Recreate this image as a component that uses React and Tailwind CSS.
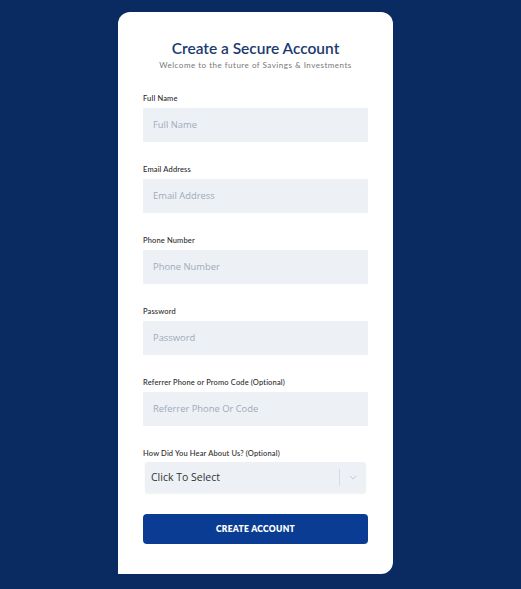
import React from "react";

const fields = [
  { label: "Full Name", ph: "Full Name" },
  { label: "Email Address", ph: "Email Address" },
  { label: "Phone Number", ph: "Phone Number" },
  { label: "Password", ph: "Password" },
  { label: "Referrer Phone or Promo Code (Optional)", ph: "Referrer Phone Or Code" },
];

export default function App() {
  return (
    <div className="w-[521px] h-[589px] bg-[#0a2a62] pt-[12px] pl-[118px] font-['Lato',sans-serif]">
      <div className="w-[275px] h-[562px] bg-white rounded-t-[12px] rounded-br-[12px] px-[25px] pt-[26px]">
        <h1 className="text-center text-[15.5px] leading-[20px] font-semibold text-[#1b3a70]">
          Create a Secure Account
        </h1>
        <p className="mt-[2px] text-center text-[8px] leading-[10px] text-[#777] tracking-[0.5px]">
          Welcome to the future of Savings &amp; Investments
        </p>
        <div className="mt-[24px] flex flex-col gap-[23px]">
          {fields.map((f) => (
            <div key={f.label}>
              <div className="text-[7.5px] leading-[10px] font-medium text-[#2b2b2b] tracking-[0.15px] mb-[4px]">
                {f.label}
              </div>
              <div className="h-[34px] bg-[#edf1f6] flex items-center pl-[10px] text-[9.4px] text-[#a0aab8] font-['Open_Sans',sans-serif]">
                {f.ph}
              </div>
            </div>
          ))}
          <div>
            <div className="text-[7.5px] leading-[10px] font-medium text-[#2b2b2b] tracking-[0.15px] mb-[3px]">
              How Did You Hear About Us? (Optional)
            </div>
            <div className="mx-[2px] h-[31px] bg-[#edf1f6] rounded-[3px] shadow-[0_1px_2px_rgba(0,0,0,0.06)] flex items-center pl-[6px] text-[10.5px] text-[#333] font-['Open_Sans',sans-serif]">
              <span className="flex-1">Click To Select</span>
              <span className="w-px h-[17px] bg-[#d6dbe2]" />
              <span className="w-[26px] flex justify-center">
                <svg width="8" height="5" viewBox="0 0 8 5" fill="none">
                  <path d="M1 1l3 3 3-3" stroke="#c3c9d2" strokeWidth="1" />
                </svg>
              </span>
            </div>
          </div>
        </div>
        <button className="mt-[21px] w-full h-[30px] bg-[#0b3c93] rounded-[4px] text-white text-[8.5px] font-extrabold tracking-[0.3px] uppercase">
          Create Account
        </button>
      </div>
    </div>
  );
}
